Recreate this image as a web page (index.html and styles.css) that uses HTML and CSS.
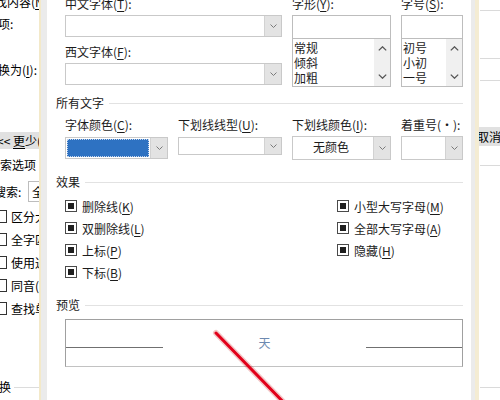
FILE: index.html
```html
<!DOCTYPE html>
<html lang="zh-CN">
<head>
<meta charset="utf-8">
<title>字体</title>
<link rel="stylesheet" href="styles.css">
</head>
<body>
<div class="desktop">
  <div class="bg-window">
    <div class="bg-left">
      <div class="bl-text t1">查找内容(<u>N</u>):</div>
      <div class="bl-text t2">选项:</div>
      <div class="bl-text t3">替换为(<u>I</u>):</div>
      <div class="less-btn">&lt;&lt; <u>更</u>少(L)</div>
      <div class="bl-group g1"><span>搜索选项</span><span class="rule"></span></div>
      <div class="bl-search"><span class="bl-search-lbl">搜索:</span><span class="bl-combo">全部</span></div>
      <div class="bl-chk first"><span class="bl-box"></span><span>区分大小写(<u>H</u>)</span></div>
      <div class="bl-chk"><span class="bl-box"></span><span>全字匹配(<u>Y</u>)</span></div>
      <div class="bl-chk"><span class="bl-box"></span><span>使用通配符(<u>U</u>)</span></div>
      <div class="bl-chk"><span class="bl-box"></span><span>同音(英文)(<u>K</u>)</span></div>
      <div class="bl-chk"><span class="bl-box"></span><span>查找单词的所有形式(英文)(<u>W</u>)</span></div>
      <div class="bl-group g2"><span>替换</span><span class="rule"></span></div>
    </div>
    <div class="bg-mid"></div>
    <div class="bg-right">
      <div class="hline m10"></div>
      <div class="hline m47"></div>
      <div class="hline m21"></div>
      <div class="cancel-btn">取消</div>
      <div class="hline m19"></div>
      <div class="hline m221"></div>
    </div>
  </div>

  <div class="font-dialog">
    <div class="dlg-body">
      <div class="top-grid">
        <div class="col">
          <div class="lbl">中文字体(<u>T</u>):</div>
          <div class="combo"><div class="field"></div><div class="dd"><svg width="7" height="4" viewBox="0 0 7 4"><polyline points="0.5,0.5 3.5,3.5 6.5,0.5" fill="none" stroke="#7a7a7a" stroke-width="1"/></svg></div></div>
          <div class="lbl gap7">西文字体(<u>F</u>):</div>
          <div class="combo"><div class="field"></div><div class="dd"><svg width="7" height="4" viewBox="0 0 7 4"><polyline points="0.5,0.5 3.5,3.5 6.5,0.5" fill="none" stroke="#7a7a7a" stroke-width="1"/></svg></div></div>
        </div>
        <div class="col">
          <div class="lbl">字形(<u>Y</u>):</div>
          <div class="textbox"></div>
          <div class="listbox">
            <ul class="items"><li>常规</li><li>倾斜</li><li>加粗</li></ul>
            <div class="scroll">
              <svg width="9" height="5" viewBox="0 0 9 5"><polyline points="0.8,4.4 4.5,0.8 8.2,4.4" fill="none" stroke="#555" stroke-width="1.3"/></svg>
              <svg width="9" height="5" viewBox="0 0 9 5"><polyline points="0.8,0.6 4.5,4.2 8.2,0.6" fill="none" stroke="#555" stroke-width="1.3"/></svg>
            </div>
          </div>
        </div>
        <div class="col">
          <div class="lbl">字号(<u>S</u>):</div>
          <div class="textbox"></div>
          <div class="listbox">
            <ul class="items"><li>初号</li><li>小初</li><li>一号</li></ul>
            <div class="scroll">
              <svg width="9" height="5" viewBox="0 0 9 5"><polyline points="0.8,4.4 4.5,0.8 8.2,4.4" fill="none" stroke="#555" stroke-width="1.3"/></svg>
              <svg width="9" height="5" viewBox="0 0 9 5"><polyline points="0.8,0.6 4.5,4.2 8.2,0.6" fill="none" stroke="#555" stroke-width="1.3"/></svg>
            </div>
          </div>
        </div>
      </div>

      <div class="group-head head-all"><span>所有文字</span><span class="rule"></span></div>
      <div class="row3">
        <div class="cell">
          <div class="lbl">字体颜色(<u>C</u>):</div>
          <div class="combo c-color"><div class="swatch"></div><div class="dd"><svg width="7" height="4" viewBox="0 0 7 4"><polyline points="0.5,0.5 3.5,3.5 6.5,0.5" fill="none" stroke="#7a7a7a" stroke-width="1"/></svg></div></div>
        </div>
        <div class="cell">
          <div class="lbl">下划线线型(<u>U</u>):</div>
          <div class="combo c-short"><div class="field"></div><div class="dd"><svg width="7" height="4" viewBox="0 0 7 4"><polyline points="0.5,0.5 3.5,3.5 6.5,0.5" fill="none" stroke="#7a7a7a" stroke-width="1"/></svg></div></div>
        </div>
        <div class="cell">
          <div class="lbl">下划线颜色(<u>I</u>):</div>
          <div class="combo c-tall"><div class="field centered">无颜色</div><div class="dd"><svg width="7" height="4" viewBox="0 0 7 4"><polyline points="0.5,0.5 3.5,3.5 6.5,0.5" fill="none" stroke="#7a7a7a" stroke-width="1"/></svg></div></div>
        </div>
        <div class="cell">
          <div class="lbl">着重号(·):</div>
          <div class="combo c-tall"><div class="field"></div><div class="dd"><svg width="7" height="4" viewBox="0 0 7 4"><polyline points="0.5,0.5 3.5,3.5 6.5,0.5" fill="none" stroke="#7a7a7a" stroke-width="1"/></svg></div></div>
        </div>
      </div>

      <div class="group-head head-fx"><span>效果</span><span class="rule"></span></div>
      <div class="effects">
        <div class="chk"><span class="box"><span class="fill"></span></span><span>删除线(<u>K</u>)</span></div>
        <div class="chk"><span class="box"><span class="fill"></span></span><span>双删除线(<u>L</u>)</span></div>
        <div class="chk"><span class="box"><span class="fill"></span></span><span>上标(<u>P</u>)</span></div>
        <div class="chk"><span class="box"><span class="fill"></span></span><span>下标(<u>B</u>)</span></div>
        <div class="chk"><span class="box"><span class="fill"></span></span><span>小型大写字母(<u>M</u>)</span></div>
        <div class="chk"><span class="box"><span class="fill"></span></span><span>全部大写字母(<u>A</u>)</span></div>
        <div class="chk"><span class="box"><span class="fill"></span></span><span>隐藏(<u>H</u>)</span></div>
      </div>

      <div class="group-head head-pv"><span>预览</span><span class="rule"></span></div>
      <div class="preview">
        <span class="pv-line"></span>
        <span class="pv-text">天</span>
        <span class="pv-line right"></span>
      </div>
    </div>
  </div>

  <svg class="arrow" width="500" height="400" viewBox="0 0 500 400">
    <line x1="216" y1="333" x2="294" y2="413" stroke="rgba(200,0,0,0.22)" stroke-width="6" stroke-linecap="round"/>
    <line x1="216" y1="333" x2="294" y2="413" stroke="#e2001a" stroke-width="3" stroke-linecap="round"/>
  </svg>
</div>
</body>
</html>
```

FILE: styles.css
```css
html, body {
  margin: 0;
  padding: 0;
}
body {
  width: 500px;
  height: 400px;
  overflow: hidden;
  background: #fff;
  font-family: "Noto Sans CJK SC", "Microsoft YaHei", sans-serif;
  font-size: 12px;
  color: #1c1c1c;
}
u {
  text-decoration-thickness: 1px;
  text-underline-offset: 2px;
}
.desktop {
  position: relative;
  width: 500px;
  height: 400px;
  overflow: hidden;
}

/* ---------- background window (Find & Replace) ---------- */
.bg-window {
  display: grid;
  grid-template-columns: 39px 441px 20px;
  height: 400px;
}
.bg-left {
  display: flex;
  flex-direction: column;
  white-space: nowrap;
  line-height: 16px;
  color: #000;
}
.bl-text {
  height: 16px;
}
.t1 { margin: -6px 0 0 -17px; }
.t2 { margin: 6px 0 0 -14px; }
.t3 { margin: 30px 0 0 -14px; }
.less-btn {
  margin: 54px 0 0 -20px;
  height: 17px;
  line-height: 17px;
  width: 80px;
  padding-left: 17px;
  background: #e1e1e1;
}
.bl-group {
  display: flex;
  align-items: center;
  height: 16px;
}
.bl-group .rule {
  flex: 1;
  height: 1px;
  background: #dcdcdc;
  margin-left: 3px;
}
.g1 { margin: 8px 0 0 -12px; }
.g2 { margin: 59px 0 0 -13px; }
.bl-search {
  display: flex;
  align-items: center;
  margin: 8px 0 0 -6px;
  height: 21px;
}
.bl-search-lbl {
  width: 34px;
  flex: none;
}
.bl-combo {
  height: 21px;
  line-height: 19px;
  box-sizing: border-box;
  border: 1px solid #bdbdbd;
  padding-left: 3px;
  width: 60px;
  flex: none;
}
.bl-chk {
  display: flex;
  align-items: center;
  gap: 4px;
  height: 23px;
  margin-left: -6px;
}
.bl-chk.first { margin-top: 3px; }
.bl-box {
  width: 13px;
  height: 13px;
  box-sizing: border-box;
  border: 1px solid #333;
  background: #fff;
  flex: none;
}
.bg-right {
  display: flex;
  flex-direction: column;
}
.hline {
  height: 1px;
  background: #dadada;
}
.m10 { margin-top: 10px; }
.m47 { margin-top: 47px; }
.m21 { margin-top: 21px; }
.m19 { margin-top: 19px; }
.m221 { margin-top: 221px; }
.cancel-btn {
  margin: 46px 0 0 -20px;
  height: 19px;
  line-height: 19px;
  width: 60px;
  padding-left: 17px;
  background: #e1e1e1;
  white-space: nowrap;
  color: #000;
}

/* ---------- font dialog ---------- */
.font-dialog {
  position: absolute;
  left: 39px;
  top: 0;
  width: 440px;
  height: 400px;
  box-sizing: border-box;
  display: flex;
  background: #ebebeb;
  border-left: 2px solid #f3e9c9;
  border-right: 4px solid #f4ecd3;
  padding: 0 4px 0 6px;
}
.dlg-body {
  flex: 1;
  background: #fff;
  padding: 0 8px 0 9px;
  display: flex;
  flex-direction: column;
}
.lbl {
  height: 16px;
  line-height: 16px;
  white-space: nowrap;
}
.gap7 { margin-top: 7px; }

.top-grid {
  margin: -4px 0 0 9px;
  display: grid;
  grid-template-columns: 217px 99px 62px;
  column-gap: 10px;
}
.col {
  display: flex;
  flex-direction: column;
}
.combo {
  margin-top: 3px;
  height: 22px;
  box-sizing: border-box;
  border: 1px solid #c9c9c9;
  display: flex;
  background: #fff;
}
.field {
  flex: 1;
}
.field.centered {
  text-align: center;
  line-height: 20px;
  padding-right: 4px;
}
.dd {
  width: 16px;
  flex: none;
  background: #e3e3e3;
  border-left: 1px solid #d2d2d2;
  display: flex;
  align-items: center;
  justify-content: center;
}
.textbox {
  margin-top: 3px;
  height: 24px;
  box-sizing: border-box;
  border: 1px solid #bdbdbd;
}
.listbox {
  height: 48px;
  box-sizing: border-box;
  border: 1px solid #bdbdbd;
  border-top: 0;
  display: flex;
}
.items {
  flex: 1;
  list-style: none;
  margin: 0;
  padding: 1px 0 0 1px;
  line-height: 15px;
}
.scroll {
  width: 16px;
  flex: none;
  background: #f0f0f0;
  display: flex;
  flex-direction: column;
  justify-content: space-between;
  align-items: center;
  padding: 7px 0 7px;
  box-sizing: border-box;
}
.scroll svg { display: block; }

.group-head {
  display: flex;
  align-items: center;
  gap: 5px;
  height: 16px;
  line-height: 16px;
  color: #1a1a1a;
}
.group-head .rule {
  flex: 1;
  height: 1px;
  background: #e2e2e2;
}
.head-all { margin-top: 8px; }
.head-fx { margin-top: 14px; }
.head-pv { margin-top: 14px; }

.row3 {
  display: grid;
  grid-template-columns: 103px 104px 99px 62px;
  column-gap: 10px;
  margin: 6px 0 0 9px;
  align-items: start;
}
.cell {
  display: flex;
  flex-direction: column;
}
.cell .combo {
  margin-top: 4px;
  height: 23px;
}
.cell .combo.c-color { height: 22px; }
.cell .combo.c-short { height: 18px; }
.cell .combo.c-tall { margin-top: 3px; height: 24px; }
.swatch {
  flex: 1;
  margin: 1px;
  background: #2e72c2;
  border: 1px dotted #c4d5ec;
}

.effects {
  display: grid;
  grid-template-columns: 272px 1fr;
  grid-template-rows: repeat(4, 22px);
  grid-auto-flow: column;
  margin: 5px 0 0 9px;
}
.chk {
  display: flex;
  align-items: center;
  gap: 5px;
  white-space: nowrap;
}
.box {
  width: 12px;
  height: 12px;
  box-sizing: border-box;
  border: 1px solid #4a4a4a;
  padding: 2px;
  flex: none;
}
.fill {
  display: block;
  width: 100%;
  height: 100%;
  background: #1f1f1f;
}

.preview {
  margin: 6px 0 0 9px;
  height: 48px;
  box-sizing: border-box;
  border: 1px solid #a0a0a0;
  border-bottom-color: #c2c2c2;
  display: flex;
  align-items: flex-start;
}
.pv-line {
  width: 97px;
  height: 1px;
  background: #707070;
  margin-top: 27px;
  flex: none;
}
.pv-line.right { width: 96px; }
.pv-text {
  flex: 1;
  text-align: center;
  padding-top: 15px;
  line-height: 16px;
  color: #6d89b0;
}

.arrow {
  position: absolute;
  left: 0;
  top: 0;
  pointer-events: none;
}
```
